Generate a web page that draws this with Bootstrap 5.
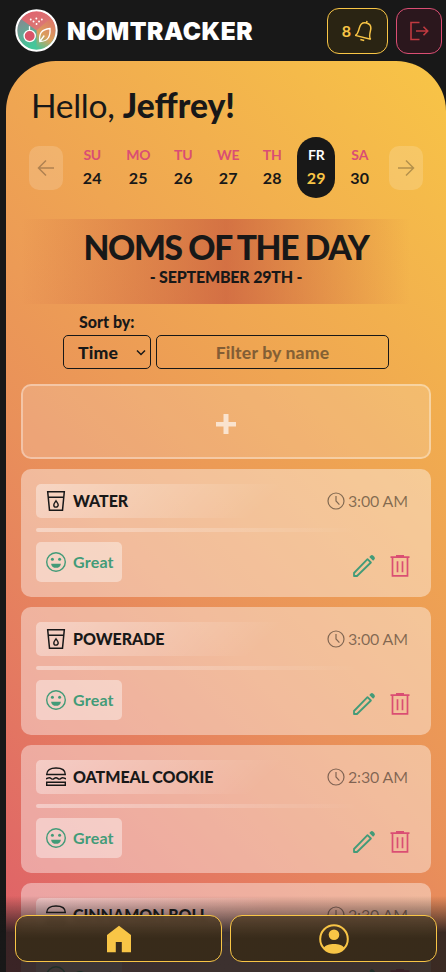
<!DOCTYPE html>
<html lang="en">
<head>
<meta charset="utf-8">
<meta name="viewport" content="width=device-width, initial-scale=1">
<title>NomTracker</title>
<link href="https://cdn.jsdelivr.net/npm/bootstrap@5.3.0/dist/css/bootstrap.min.css" rel="stylesheet">
<style>
:root{--ink:#181818;--sun:#f8c546;--rose:#da4e73;--leaf:#429b78}
body{background:var(--ink);color:var(--ink);font-family:Lato,sans-serif;height:972px;overflow:hidden;line-height:1.2}
svg{display:block;flex:none}
.topbar{height:61px;padding:0 4px 0 15px}
.brand-name{font:900 24.500px/1 Inter,sans-serif;letter-spacing:.5px;margin-left:9px;padding-top:1px}
.pill{height:46px;border:1px solid var(--sun);border-radius:12px}
.bell{width:61px;background:#2a2413;color:var(--sun);font-size:16px;font-weight:700;gap:4px;padding-left:1px}
.exit{width:46px;background:#2b171d;border-color:var(--rose);color:#c03a40}
.panel{margin-left:6px;height:911px;overflow:hidden;border-radius:50px 50px 0 0;background:linear-gradient(45deg,#de5e69 0%,#e9905a 41%,#f8c546 100%);padding:0 15px}
.hello{font-size:33.600px;line-height:40px;padding:24px 0 0 10px;height:76px;margin:0;font-weight:400;letter-spacing:-.3px}
.hello b{font-weight:900;letter-spacing:0}
.week{height:61px;padding:0 8px}
.arrow{width:34px;height:44px;border-radius:10px;background:#ffffff29;color:#00000045}
.days-row{gap:6.600px}
.day{width:38px;height:61px;border-radius:19px;font-weight:700;font-size:16px;line-height:23px;padding-bottom:4px;letter-spacing:.2px}
.day:nth-child(1){margin-right:1.400px}
.day:nth-child(2),.day:nth-child(3){margin-right:.400px}
.day:nth-child(4),.day:nth-child(5){margin-right:-.600px}
.day:nth-child(6){margin-right:-1px}
.day span{font-size:14px;font-weight:700;color:var(--rose);letter-spacing:-.2px}
.day.today{background:var(--ink);color:var(--sun)}
.day.today span{color:#fff}
.heading{margin-top:21px;height:85px;background:linear-gradient(90deg,#bb403800 0%,#bb403888 50%,#bb403800 95%)}
.heading h1{font-size:33.600px;font-weight:900;line-height:40px;margin:0;padding-top:8px;letter-spacing:-1.350px}
.heading h2{font-size:16px;font-weight:900;line-height:19px;margin:0;letter-spacing:-.200px}
.filters{width:326px;margin:8px auto 15px}
.filters label{font-size:16px;font-weight:900;line-height:19px;padding-left:16px;margin-bottom:4px}
.field{height:34px;border:1px solid var(--ink);border-radius:5px;background:transparent;font-weight:900;font-size:17.600px;letter-spacing:.15px;color:var(--ink);outline:0}
.sorter{width:88px;padding:2px 4px 0 14px}
.finder{width:233px;text-align:center}
.finder::placeholder{color:#1818187f}
.adder{height:75px;border:2px solid #ffffff59;border-radius:10px;background:#ffffff2e;color:#ffffffa6;padding-top:4px}
.nom{height:128px;margin-top:10px;padding:15px;border-radius:10px;background:#ffffff66}
.nom-title{height:34px;border-radius:5px;background:linear-gradient(135deg,#ffffff66 0%,#ffffff00 60%);padding:0 8px 0 9px;font-size:16px;font-weight:700}
.nom-name{font-weight:900;letter-spacing:-.050px;margin-left:6px}
.nom-time{font-weight:400;color:#00000078;gap:3px;letter-spacing:-.150px}
.rule{height:4px;margin:10px 0;border-radius:2px;background:linear-gradient(90deg,#ffffff66,#ffffff00 85%)}
.mood{width:86px;height:40px;border-radius:5px;background:#ffffff66;color:var(--leaf);font-weight:700;font-size:16px;padding-left:9px;gap:6px;letter-spacing:.2px}
.tools{padding-right:6px;gap:14px;padding-top:12px}
.tool-edit{color:var(--leaf)}
.tool-delete{color:var(--rose)}
.dock{height:76px;padding:19px 9px 10px 15px;gap:8px;background:linear-gradient(#18181800,#181818d4 48%)}
.tab{height:47px;background:linear-gradient(#57422de8,#382b19ed 50%);color:var(--sun);backdrop-filter:blur(2px)}
</style>
</head>
<body>
<svg width="0" height="0" class="position-absolute" fill="none" stroke="currentColor">
<defs>
<symbol id="cup" viewBox="0 0 20 22"><path d="M1.700 1.700h16.600l-1.800 18.600h-13zM2.300 7.300h15.400" stroke-width="1.500"/><path d="M10 10.800c-1.200 1.700-2.200 2.600-2.200 4.100a2.200 2.200 0 0 0 4.400 0c0-1.500-1-2.400-2.200-4.100z" stroke-width="1.400"/></symbol>
<symbol id="burger" viewBox="0 0 22 22"><path d="M1.700 8.500C1.700 4.200 5.500 2 11 2s9.300 2.200 9.300 6.500zM1 12.700c1.700 0 1.700-1 3.400-1s1.700 1.400 3.300 1.400 1.700-1.400 3.300-1.400 1.700 1.400 3.300 1.400 1.700-1.400 3.300-1.400 1.700 1 3.400 1M1.700 16.200h18.600v3H1.700z" stroke-width="1.400"/></symbol>
<symbol id="clock" viewBox="0 0 18 18"><circle cx="9" cy="9" r="8" stroke-width="1.200"/><path d="M9 4v5l3.400 3.600" stroke-width="1.200"/></symbol>
<symbol id="smile" viewBox="0 0 22 22"><circle cx="11" cy="11" r="9.300" stroke-width="1.400"/><path d="M6.100 12.800h9.800a4.900 4 0 0 1-9.800 0z" fill="currentColor" stroke="none"/><circle cx="7.400" cy="8.200" r="1.500" fill="currentColor" stroke="none"/><circle cx="14.600" cy="8.200" r="1.500" fill="currentColor" stroke="none"/></symbol>
<symbol id="pen" viewBox="0 0 24 24"><path d="M2 22v-3L15.500 5.100l3.400 3.400L5 22zM4.500 19.500" stroke-width="1.800" stroke-linejoin="round"/><path d="m17.300 2.900 1.200-1.200a2 2 0 0 1 2.800 0l1 1a2 2 0 0 1 0 2.800l-1.200 1.200z" fill="currentColor" stroke="none"/></symbol>
<symbol id="bin" viewBox="0 0 20 24"><path d="M.5 3.200h19M6 1.800h8M2.500 3.500v18.300h15V3.500M7.500 7.300v11M12.500 7.300v11" stroke-width="1.700"/></symbol>
<linearGradient id="dish" x1=".2" y1="0" x2=".6" y2="1"><stop stop-color="#e0606d"/><stop offset=".5" stop-color="#da7975"/><stop offset="1" stop-color="#43c79a"/></linearGradient>
<linearGradient id="dishLeft" x1="0" y1="0" x2=".3" y2="1"><stop stop-color="#8a8590"/><stop offset="1" stop-color="#43c79a"/></linearGradient>
<linearGradient id="dishRight" x1=".6" y1="0" x2=".2" y2="1"><stop stop-color="#dc7868"/><stop offset=".55" stop-color="#dba05c"/><stop offset="1" stop-color="#4bc496"/></linearGradient>
</defs></svg>

<header class="topbar d-flex align-items-center justify-content-between text-white">
<div class="d-flex align-items-center">
<svg width="43" height="43" viewBox="0 0 43 43" fill="none" stroke="#fff"><circle cx="21.500" cy="21.500" r="20" fill="url(#dish)"/><path d="M21.500 21.500 36 9a19.500 19.500 0 0 1-14.500 32z" fill="url(#dishRight)" stroke="none"/><path d="M21.500 21.500 6 10a19.500 19.500 0 0 0 15.500 31z" fill="url(#dishLeft)" stroke="none"/><circle cx="21.500" cy="21.500" r="20.200" stroke-width="2"/><circle cx="14.700" cy="27" r="5.600" fill="#d95468" stroke-width="1.300"/><path d="M14.500 21.200v-4M24.800 32.500c-1-8 1.500-12 10.200-13 .5 8-2 13-10.200 13zl4.500-6" stroke-width="1.300"/><path d="M15.700 10.500h.1M21.300 9.500h.1M26.800 10.500h.1M18.500 12.500h.1M24 12.500h.1M21.500 15h.1" stroke-width="1.800" stroke-linecap="round"/></svg>
<span class="brand-name">NOMTRACKER</span></div>
<div class="d-flex gap-2">
<div class="pill bell d-flex align-items-center justify-content-center"><span>8</span><svg width="19" height="22" viewBox="0 0 19 22" fill="none" stroke="currentColor" stroke-width="1.500"><path d="M1.500 17.500c2-1 2.300-3 2.300-8.500 0-4 2-6.300 5.700-6.300S15.200 5 15.200 9c0 5.500.3 7.500 2.300 8.500zM7.500 20.200h4M9.500 2.700V.5" transform="rotate(14 9.500 11)"/></svg></div>
<div class="pill exit d-flex align-items-center justify-content-center"><svg width="20" height="20" viewBox="0 0 20 20" fill="none" stroke="currentColor" stroke-width="1.600"><path d="M10.500 1.500H2v17h8.500M7 10h11.500M14.500 5.800l4.200 4.200-4.200 4.200"/></svg></div>
</div>
</header>

<main class="panel">
<p class="hello">Hello, <b>Jeffrey!</b></p>
<div class="week d-flex align-items-center justify-content-between">
<div class="arrow d-flex align-items-center justify-content-center"><svg width="18" height="18" viewBox="0 0 18 18" fill="none" stroke="currentColor" stroke-width="1.500"><path d="M17 9H2M9 1.500 1.500 9 9 16.500"/></svg></div>
<div class="days-row d-flex text-center" id="days"></div>
<div class="arrow d-flex align-items-center justify-content-center"><svg width="18" height="18" viewBox="0 0 18 18" fill="none" stroke="currentColor" stroke-width="1.500"><path d="M1 9h15M9 1.500 16.500 9 9 16.500"/></svg></div>
</div>
<section class="heading text-center"><h1>NOMS OF THE DAY</h1><h2>- SEPTEMBER 29TH -</h2></section>
<section class="filters"><label class="d-block">Sort by:</label>
<div class="d-flex justify-content-between">
<div class="field sorter d-flex align-items-center justify-content-between"><span>Time</span><svg width="10" height="8" viewBox="0 0 10 8" fill="none" stroke="currentColor" stroke-width="1.500"><path d="m1 1.500 4 4 4-4"/></svg></div>
<input class="field finder" placeholder="Filter by name" aria-label="Filter by name"></div></section>
<div class="adder d-flex align-items-center justify-content-center"><svg width="20" height="20" viewBox="0 0 20 20" fill="currentColor"><path d="M7.500 0h5v8H20v4.500h-7.500V20h-5v-7.500H0V8h7.500z"/></svg></div>
<div id="noms"></div>
</main>

<nav class="dock fixed-bottom d-flex">
<div class="pill tab col d-flex align-items-center justify-content-center"><svg width="26" height="28" viewBox="0 0 26 28" fill="currentColor"><path d="M13 .8 1 10v17.300h8.800V17h6v10.300H25V10z"/></svg></div>
<div class="pill tab col d-flex align-items-center justify-content-center"><svg width="30" height="30" viewBox="0 0 30 30"><circle cx="15" cy="15" r="13.800" fill="none" stroke="currentColor" stroke-width="2"/><circle cx="15" cy="10.700" r="5.300" fill="currentColor"/><path d="M4.500 24c3-5.500 18-5.500 21 0A14 14 0 0 1 4.500 24z" fill="currentColor"/></svg></div>
</nav>
<script>
const days=[['SU',24],['MO',25],['TU',26],['WE',27],['TH',28],['FR',29],['SA',30]];
document.getElementById('days').innerHTML=days.map(([d,n])=>`<div class="day d-flex flex-column justify-content-center ${n===29?'today':''}"><span>${d}</span>${n}</div>`).join('');
const icon=(id,w,h)=>`<svg width="${w}" height="${h}" fill="none" stroke="currentColor"><use href="#${id}"/></svg>`;
const noms=[['WATER','3:00 AM','cup'],['POWERADE','3:00 AM','cup'],['OATMEAL COOKIE','2:30 AM','burger'],['CINNAMON ROLL','2:30 AM','burger']];
document.getElementById('noms').innerHTML=noms.map(([n,t,i])=>`<article class="nom"><div class="nom-title d-flex align-items-center">${icon(i,22,22)}<span class="nom-name">${n}</span><span class="nom-time ms-auto d-flex align-items-center">${icon('clock',18,18)}${t}</span></div><div class="rule"></div><div class="d-flex justify-content-between"><div class="mood d-flex align-items-center">${icon('smile',22,22)}Great</div><div class="tools d-flex"><span class="tool-edit">${icon('pen',24,24)}</span><span class="tool-delete">${icon('bin',20,24)}</span></div></div></article>`).join('');
</script>
<script src="https://cdn.jsdelivr.net/npm/bootstrap@5.3.0/dist/js/bootstrap.bundle.min.js"></script>
</body>
</html>
